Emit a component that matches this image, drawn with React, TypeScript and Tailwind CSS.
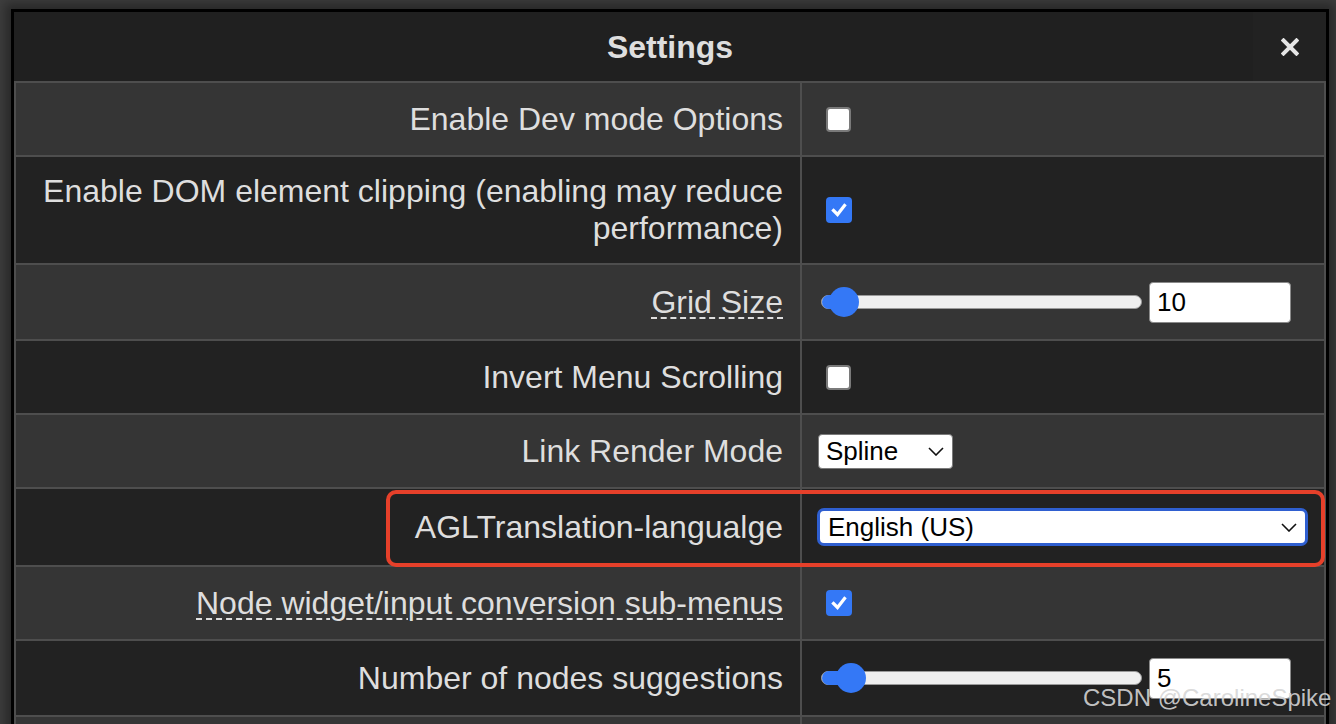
import React from 'react'

const font = "font-['Liberation_Sans','Helvetica',Arial,sans-serif]"

const Check = ({ checked }: { checked?: boolean }) =>
  checked ? (
    <span className="ml-[8px] flex h-[26px] w-[26px] items-center justify-center rounded-[4px] bg-[#3478f6]">
      <svg width="18" height="18" viewBox="0 0 18 18">
        <path d="M3.5 9.5 L7.5 13.5 L14.5 4.5" fill="none" stroke="white" strokeWidth="3.2" strokeLinecap="square" />
      </svg>
    </span>
  ) : (
    <span className="ml-[8px] block h-[25px] w-[25px] rounded-[4px] border-2 border-[#7a7a7a] bg-white" />
  )

const Chevron = () => (
  <svg width="16" height="9" viewBox="0 0 16 9">
    <polyline points="1,1 8,8 15,1" fill="none" stroke="#111" strokeWidth="1.6" />
  </svg>
)

const Slider = ({ pos, value }: { pos: number; value: string }) => (
  <div className="ml-[3px] flex items-center gap-[7px]">
    <div className="relative h-[14px] w-[321px] rounded-full border border-[#9a9a9a] bg-[#efefef]">
      <div className="absolute left-0 top-[-1px] h-[14px] rounded-l-full bg-[#3478f6]" style={{ width: pos + 2 }} />
      <div
        className="absolute top-[-9px] h-[30px] w-[30px] rounded-full bg-[#3478f6]"
        style={{ left: pos - 15 }}
      />
    </div>
    <div className="flex h-[41px] w-[142px] items-center rounded-[4px] border border-[#8a8a8a] bg-white pl-[7px] text-[26px] text-black">
      {value}
    </div>
  </div>
)

interface RowProps {
  label: React.ReactNode
  height: string
  bg: string
  children?: React.ReactNode
  extra?: React.ReactNode
}

const Row = ({ label, height, bg, children, extra }: RowProps) => (
  <div className={`relative flex border-b-2 border-[#4e4e4e] ${height} ${bg}`}>
    <div className="flex w-[786px] shrink-0 items-center justify-end border-r-2 border-[#4e4e4e] pr-[17px] text-right text-[32px] leading-[37px] text-[#dedede]">
      {label}
    </div>
    <div className="flex flex-1 items-center pl-[16px]">{children}</div>
    {extra}
  </div>
)

const Dashed = ({ children }: { children: React.ReactNode }) => (
  <span className="underline decoration-[#dedede] decoration-dashed decoration-2 underline-offset-[5px]">{children}</span>
)

export default function App() {
  return (
    <div className={`relative h-[724px] w-[1336px] overflow-hidden bg-[#3e3e3e] pl-[11px] pt-[9px] ${font}`}>
      <div className="w-[1318px] border-[3px] border-black bg-[#202020] shadow-[0_0_10px_6px_rgba(0,0,0,0.35)]">
        <div className="grid h-[69px] grid-cols-[73px_1fr_73px] items-center">
          <div />
          <div className="text-center text-[32px] font-bold leading-[36px] text-[#dedede]">Settings</div>
          <div className="flex h-full items-center justify-center bg-[#222]">
            <svg width="18" height="18" viewBox="0 0 18 18">
              <path d="M2.5 2.5 L15.5 15.5 M15.5 2.5 L2.5 15.5" stroke="#e6e6e6" strokeWidth="4" strokeLinecap="square" />
            </svg>
          </div>
        </div>
        <div className="border-x-2 border-t-2 border-[#4e4e4e]">
          <Row label="Enable Dev mode Options" height="h-[74px]" bg="bg-[#353535]">
            <Check />
          </Row>
          <Row
            label={
              <span>
                Enable DOM element clipping (enabling may reduce
                <br />
                performance)
              </span>
            }
            height="h-[108px]"
            bg="bg-[#222222]"
          >
            <Check checked />
          </Row>
          <Row label={<Dashed>Grid Size</Dashed>} height="h-[76px]" bg="bg-[#353535]">
            <Slider pos={22} value="10" />
          </Row>
          <Row label="Invert Menu Scrolling" height="h-[74px]" bg="bg-[#222222]">
            <Check />
          </Row>
          <Row label="Link Render Mode" height="h-[74px]" bg="bg-[#353535]">
            <div className="flex h-[35px] w-[135px] items-center justify-between rounded-[4px] border border-[#7a7a7a] bg-white pl-[7px] pr-[8px] text-[26px] text-black">
              <span>Spline</span>
              <Chevron />
            </div>
          </Row>
          <Row
            label="AGLTranslation-langualge"
            height="h-[78px]"
            bg="bg-[#222222]"
            extra={
              <div className="pointer-events-none absolute left-[370px] top-[1px] h-[77px] w-[939px] rounded-[10px] border-4 border-[#e6402a]" />
            }
          >
            <div className="-ml-[1px] flex h-[38px] w-[491px] items-center justify-between rounded-[7px] border-[3px] border-[#2f5fd0] bg-white pl-[8px] pr-[8px] text-[26px] text-black">
              <span>English (US)</span>
              <Chevron />
            </div>
          </Row>
          <Row label={<Dashed>Node widget/input conversion sub-menus</Dashed>} height="h-[74px]" bg="bg-[#353535]">
            <Check checked />
          </Row>
          <Row label="Number of nodes suggestions" height="h-[76px]" bg="bg-[#222222]">
            <Slider pos={29} value="5" />
          </Row>
          <Row label="" height="h-[40px]" bg="bg-[#353535]" />
        </div>
      </div>
      <div className="absolute left-[1083px] top-[684px] text-[24px] leading-[28px] text-[#d6d6d6]/90">CSDN @CarolineSpike</div>
    </div>
  )
}
